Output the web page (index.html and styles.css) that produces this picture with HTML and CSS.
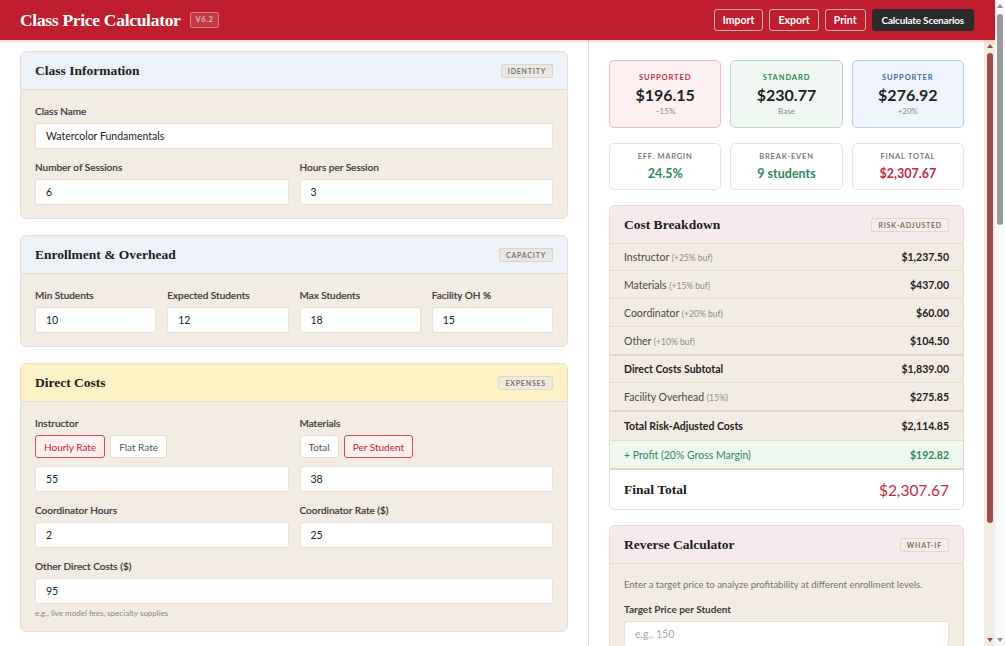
FILE: index.html
```html
<!DOCTYPE html>
<html lang="en">
<head>
<meta charset="utf-8">
<title>Class Price Calculator</title>
<link rel="stylesheet" href="styles.css">
</head>
<body>
<div class="app">
  <header class="topbar">
    <div class="brand">
      <h1>Class Price Calculator</h1>
      <span class="ver">V6.2</span>
    </div>
    <div class="actions">
      <button class="hbtn">Import</button>
      <button class="hbtn">Export</button>
      <button class="hbtn">Print</button>
      <button class="hbtn primary">Calculate Scenarios</button>
    </div>
  </header>

  <div class="layout">
    <main class="forms">
      <section class="card">
        <div class="card-head blue"><h2>Class Information</h2><span class="tag">IDENTITY</span></div>
        <div class="card-body">
          <div class="field"><label>Class Name</label><input type="text" value="Watercolor Fundamentals"></div>
          <div class="grid2">
            <div class="field"><label>Number of Sessions</label><input type="text" value="6"></div>
            <div class="field"><label>Hours per Session</label><input type="text" value="3"></div>
          </div>
        </div>
      </section>

      <section class="card">
        <div class="card-head blue"><h2>Enrollment &amp; Overhead</h2><span class="tag">CAPACITY</span></div>
        <div class="card-body">
          <div class="grid4">
            <div class="field"><label>Min Students</label><input type="text" value="10"></div>
            <div class="field"><label>Expected Students</label><input type="text" value="12"></div>
            <div class="field"><label>Max Students</label><input type="text" value="18"></div>
            <div class="field"><label>Facility OH %</label><input type="text" value="15"></div>
          </div>
        </div>
      </section>

      <section class="card">
        <div class="card-head yellow"><h2>Direct Costs</h2><span class="tag tag-yellow">EXPENSES</span></div>
        <div class="card-body">
          <div class="grid2">
            <div class="field">
              <label>Instructor</label>
              <div class="toggle"><button class="tbtn on">Hourly Rate</button><button class="tbtn">Flat Rate</button></div>
              <input type="text" value="55">
            </div>
            <div class="field">
              <label>Materials</label>
              <div class="toggle"><button class="tbtn">Total</button><button class="tbtn on">Per Student</button></div>
              <input type="text" value="38">
            </div>
          </div>
          <div class="grid2">
            <div class="field"><label>Coordinator Hours</label><input type="text" value="2"></div>
            <div class="field"><label>Coordinator Rate ($)</label><input type="text" value="25"></div>
          </div>
          <div class="field">
            <label>Other Direct Costs ($)</label><input type="text" value="95">
            <p class="hint">e.g., live model fees, specialty supplies</p>
          </div>
        </div>
      </section>
    </main>

    <aside class="results-wrap">
      <div class="results">
        <div class="tiers">
          <div class="tier t-red"><span class="tier-label">SUPPORTED</span><span class="tier-price">$196.15</span><span class="tier-sub">−15%</span></div>
          <div class="tier t-green"><span class="tier-label">STANDARD</span><span class="tier-price">$230.77</span><span class="tier-sub">Base</span></div>
          <div class="tier t-blue"><span class="tier-label">SUPPORTER</span><span class="tier-price">$276.92</span><span class="tier-sub">+20%</span></div>
        </div>
        <div class="tiers">
          <div class="stat"><span class="stat-label">EFF. MARGIN</span><span class="stat-value green">24.5%</span></div>
          <div class="stat"><span class="stat-label">BREAK-EVEN</span><span class="stat-value green">9 students</span></div>
          <div class="stat"><span class="stat-label">FINAL TOTAL</span><span class="stat-value red">$2,307.67</span></div>
        </div>

        <section class="card">
          <div class="card-head pink"><h2>Cost Breakdown</h2><span class="tag tag-pink">RISK-ADJUSTED</span></div>
          <div class="rows">
            <div class="row first"><span>Instructor <small>(+25% buf)</small></span><b>$1,237.50</b></div>
            <div class="row"><span>Materials <small>(+15% buf)</small></span><b>$437.00</b></div>
            <div class="row"><span>Coordinator <small>(+20% buf)</small></span><b>$60.00</b></div>
            <div class="row"><span>Other <small>(+10% buf)</small></span><b>$104.50</b></div>
            <div class="row strong sep"><span>Direct Costs Subtotal</span><b>$1,839.00</b></div>
            <div class="row"><span>Facility Overhead <small>(15%)</small></span><b>$275.85</b></div>
            <div class="row strong sep tall"><span>Total Risk-Adjusted Costs</span><b>$2,114.85</b></div>
            <div class="row profit"><span>+ Profit (20% Gross Margin)</span><b>$192.82</b></div>
            <div class="row final"><span class="final-label">Final Total</span><span class="final-value">$2,307.67</span></div>
          </div>
        </section>

        <section class="card">
          <div class="card-head pink"><h2>Reverse Calculator</h2><span class="tag tag-pink">WHAT-IF</span></div>
          <div class="card-body rev">
            <p class="desc">Enter a target price to analyze profitability at different enrollment levels.</p>
            <div class="field"><label class="bold">Target Price per Student</label><input type="text" placeholder="e.g., 150"></div>
          </div>
        </section>
      </div>
      <div class="sb sb-panel" aria-hidden="true">
        <span class="sb-up"></span>
        <span class="sb-track"><span class="sb-thumb"></span></span>
        <span class="sb-down"></span>
      </div>
    </aside>
  </div>
</div>
<div class="sb sb-page" aria-hidden="true">
  <span class="sb-up"></span>
  <span class="sb-track"><span class="sb-thumb"></span></span>
  <span class="sb-down"></span>
</div>
</body>
</html>
```

FILE: styles.css
```css
html, body {
  height: 100%;
}
body {
  margin: 0;
  font-family: Lato, "Noto Sans", sans-serif;
  color: #333;
  background: #ffffff;
  display: flex;
  overflow: hidden;
}
.app {
  flex: 1;
  min-width: 0;
  height: 100vh;
  display: flex;
  flex-direction: column;
}

/* decorative scrollbars */
.sb {
  width: 10px;
  flex-shrink: 0;
  display: flex;
  flex-direction: column;
  align-items: center;
}
.sb-up, .sb-down {
  width: 0;
  height: 0;
  border-left: 3.5px solid transparent;
  border-right: 3.5px solid transparent;
  margin: 4px 0 3px;
}
.sb-down {
  margin: 3px 0 4px;
}
.sb-track {
  flex: 1;
  width: 100%;
  display: flex;
  justify-content: center;
}
.sb-thumb {
  width: 6px;
  border-radius: 3px;
}
.sb-page {
  height: 100vh;
  background: #f9f9f9;
}
.sb-page .sb-up { border-bottom: 4px solid #8e8e8e; }
.sb-page .sb-down { border-top: 4px solid #8e8e8e; }
.sb-page .sb-thumb {
  margin-top: 3px;
  height: 211px;
  background: #9a9a9a;
}
.sb-panel {
  width: 11px;
  background: #f3ece4;
}
.sb-panel .sb-up { border-bottom: 4px solid #9e4b50; }
.sb-panel .sb-down { border-top: 4px solid #9e4b50; }
.sb-panel .sb-thumb {
  margin-top: 2px;
  height: 470px;
  background: #9e4b50;
}

.topbar {
  position: relative;
  z-index: 2;
  height: 40px;
  flex-shrink: 0;
  box-sizing: border-box;
  background: #be1e2d;
  display: flex;
  align-items: center;
  justify-content: space-between;
  padding: 0 21px 0 20px;
  box-shadow: 0 2px 3px rgba(190, 30, 45, 0.18);
}
.brand {
  display: flex;
  align-items: center;
}
.brand h1 {
  margin: 0;
  font-family: "Liberation Serif", serif;
  font-weight: 700;
  font-size: 17.5px;
  color: #fff;
  letter-spacing: -0.3px;
}
.ver {
  margin-left: 9px;
  font-size: 7.5px;
  line-height: 10px;
  font-weight: 700;
  letter-spacing: 0.5px;
  color: rgba(255, 255, 255, 0.6);
  border: 1px solid rgba(255, 255, 255, 0.35);
  background: rgba(255, 255, 255, 0.12);
  padding: 2px 5px;
  border-radius: 2px;
}
.actions {
  display: flex;
  gap: 6px;
}
.hbtn {
  font-family: Lato, sans-serif;
  font-weight: 700;
  font-size: 10.5px;
  color: #fff;
  background: transparent;
  border: 1.5px solid rgba(255, 255, 255, 0.6);
  border-radius: 3px;
  height: 22px;
  padding: 0 8px;
  cursor: pointer;
}
.hbtn.primary {
  background: #2b2b2b;
  border-color: #2b2b2b;
  padding: 0 9px;
  font-size: 10px;
  letter-spacing: -0.2px;
}

.layout {
  flex: 1;
  min-height: 0;
  display: grid;
  grid-template-columns: 1fr 407px;
}
.forms {
  min-height: 0;
  overflow: hidden;
  padding: 11px 20px 0;
  display: flex;
  flex-direction: column;
  gap: 16px;
}
.results-wrap {
  min-height: 0;
  display: flex;
  border-left: 1px solid #e8e0d6;
}
.results {
  flex: 1;
  min-width: 0;
  overflow: hidden;
  padding: 20px 20px 0;
  display: flex;
  flex-direction: column;
  gap: 15px;
}

.card {
  background: #f3ece4;
  border: 1px solid #e6ddd2;
  border-radius: 6px;
  overflow: hidden;
  flex-shrink: 0;
}
.card-head {
  height: 38px;
  box-sizing: border-box;
  display: flex;
  align-items: center;
  justify-content: space-between;
  padding: 0 14px;
  border-bottom: 1px solid #e6ddd2;
}
.card-head.blue { background: #edf1f8; }
.card-head.yellow { background: #fdf1c6; }
.card-head.pink { background: #f6eaec; }
.card-head h2 {
  margin: 0;
  font-family: "Liberation Serif", serif;
  font-weight: 700;
  font-size: 13.5px;
  color: #1c1c1c;
}
.tag {
  font-size: 7px;
  line-height: 12px;
  font-weight: 700;
  letter-spacing: 0.8px;
  color: #77726c;
  padding: 0 6px;
  border: 1px solid #d9d4cd;
  background: #ebe8e4;
  border-radius: 2px;
}
.tag-yellow {
  background: #f1ebdf;
  border-color: #e2d9c0;
}
.tag-pink {
  background: #f5ede7;
  border-color: #e9d1d4;
}

.card-body {
  padding: 15px 14px 13px;
  display: flex;
  flex-direction: column;
  gap: 12px;
}
.grid2 {
  display: grid;
  grid-template-columns: 1fr 1fr;
  gap: 11px;
}
.grid4 {
  display: grid;
  grid-template-columns: repeat(4, 1fr);
  gap: 11px;
}
label {
  display: block;
  font-size: 10px;
  line-height: 13px;
  margin-bottom: 5px;
  color: #3b3b3b;
  font-weight: 500;
  -webkit-text-stroke: 0.2px #3b3b3b;
}
label.bold {
  font-weight: 700;
  -webkit-text-stroke: 0;
}
input {
  display: block;
  width: 100%;
  box-sizing: border-box;
  height: 26px;
  border: 1px solid #e8e0d5;
  border-radius: 3px;
  background: #fff;
  padding: 0 10px;
  font-family: Lato, sans-serif;
  font-size: 10.5px;
  color: #222;
  outline: none;
}
input::placeholder {
  color: #a9a9a9;
}
.toggle {
  display: flex;
  gap: 5px;
  margin-bottom: 8px;
}
.tbtn {
  height: 23px;
  padding: 0 8px;
  font-family: Lato, sans-serif;
  font-size: 10px;
  border: 1px solid #e6ddd2;
  background: #fff;
  color: #555;
  border-radius: 3px;
}
.tbtn.on {
  border-color: #d4495a;
  background: #fdeff1;
  color: #c41e30;
}
.hint {
  margin: 4px 0 0;
  font-size: 8px;
  line-height: 10px;
  color: #888;
}

/* results */
.tiers {
  display: grid;
  grid-template-columns: repeat(3, 1fr);
  gap: 9px;
  flex-shrink: 0;
}
.tier {
  height: 68px;
  box-sizing: border-box;
  border: 1.5px solid;
  border-radius: 5px;
  text-align: center;
  display: flex;
  flex-direction: column;
  align-items: center;
  padding-top: 11.5px;
}
.tier-label {
  font-size: 7.5px;
  line-height: 10px;
  font-weight: 700;
  letter-spacing: 0.9px;
}
.tier-price {
  margin-top: 2px;
  font-size: 16px;
  line-height: 20px;
  font-weight: 700;
  color: #222;
}
.tier-sub {
  margin-top: 1px;
  font-size: 8px;
  line-height: 10px;
  color: #8a8a8a;
}
.t-red { background: #fdf1f2; border-color: #f1bcc2; }
.t-red .tier-label { color: #c3303f; }
.t-green { background: #f1f8f3; border-color: #b7dcc2; }
.t-green .tier-label { color: #2f8a58; }
.t-blue { background: #f0f5fd; border-color: #b4cef0; }
.t-blue .tier-label { color: #3c67a8; }

.stat {
  height: 47px;
  box-sizing: border-box;
  background: #fff;
  border: 1.5px solid #ece4da;
  border-radius: 5px;
  display: flex;
  flex-direction: column;
  align-items: center;
  padding-top: 7.5px;
}
.stat-label {
  font-size: 7.5px;
  line-height: 10px;
  font-weight: 700;
  letter-spacing: 0.8px;
  color: #7a7a7a;
}
.stat-value {
  margin-top: 4px;
  font-size: 12.5px;
  line-height: 16px;
  font-weight: 700;
}
.green { color: #2f8a58; }
.red { color: #c8283a; }

.rows {
  display: flex;
  flex-direction: column;
}
.row {
  height: 28px;
  box-sizing: border-box;
  display: flex;
  align-items: center;
  justify-content: space-between;
  padding: 0 14px;
  border-top: 1px solid #e7ddd1;
  font-size: 10.5px;
  color: #4a4a4a;
}
.row.first {
  border-top: 0;
  height: 26px;
}
.row small {
  font-size: 8.5px;
  color: #8c8c8c;
}
.row b {
  color: #222;
  font-weight: 700;
}
.row.strong span {
  font-weight: 700;
  color: #222;
}
.row.sep {
  border-top: 2px solid #e3d7c9;
}
.row.tall {
  height: 30px;
}
.row.profit {
  background: #eef8f1;
  color: #2f8a58;
}
.row.profit b {
  color: #2f8a58;
}
.row.final {
  height: 41px;
  background: #fff;
  border-top: 2px solid #e3d7c9;
}
.final-label {
  font-family: "Liberation Serif", serif;
  font-weight: 700;
  font-size: 13.5px;
  color: #1c1c1c;
}
.final-value {
  font-size: 15.5px;
  color: #c8283a;
}

.rev {
  gap: 0;
}
.desc {
  margin: 0 0 12px;
  font-size: 9.5px;
  line-height: 12px;
  color: #737373;
}
```
